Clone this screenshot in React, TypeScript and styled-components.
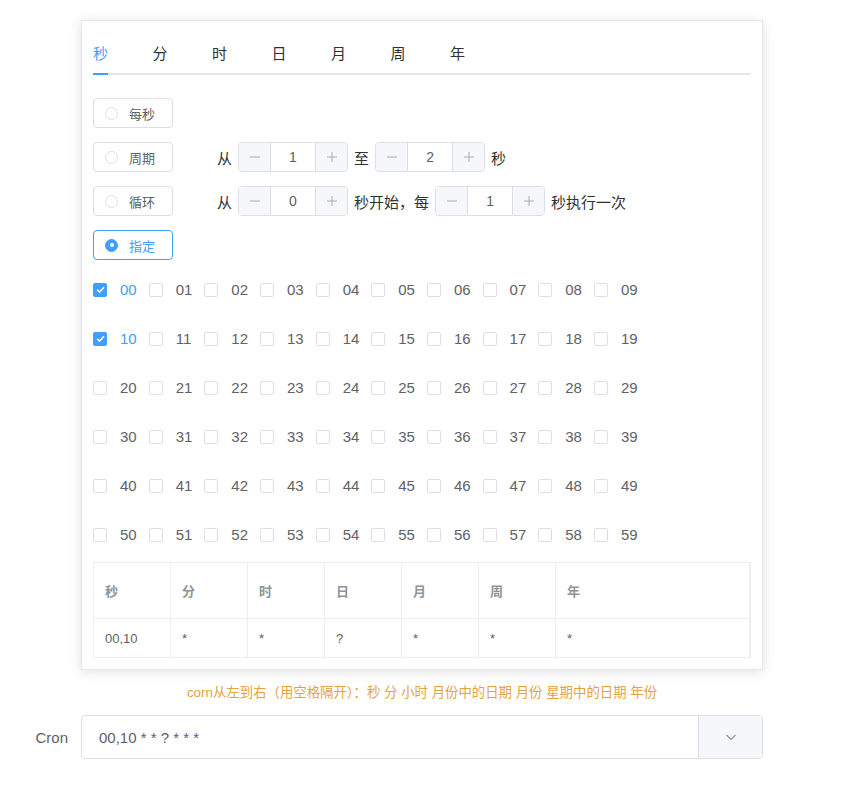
import React from "react";
import styled, { createGlobalStyle } from "styled-components";

const GlobalStyle = createGlobalStyle`
  html, body { margin: 0; padding: 0; background: #fff; }
  body {
    font-family: "Liberation Sans", Arial, "Noto Sans CJK SC", sans-serif;
    color: #606266;
  }
  * { box-sizing: border-box; }
`;

const Page = styled.div`
  padding-top: 20px;
  width: 867px;
`;

const Card = styled.div`
  margin-left: 81px;
  width: 682px;
  border: 1px solid #e4e7ed;
  box-shadow: 0 2px 12px 0 rgba(0, 0, 0, 0.12);
  background: #fff;
  padding: 12px 11px 11px 11px;
`;

const TabBar = styled.div`
  display: flex;
  height: 42px;
  border-bottom: 2px solid #e4e7ed;
`;

const Tab = styled.div<{ $active?: boolean }>`
  position: relative;
  width: 59.5px;
  height: 40px;
  line-height: 40px;
  font-size: 15px;
  color: ${(p) => (p.$active ? "#409eff" : "#303133")};
  font-family: "Noto Sans CJK SC", sans-serif;
  &::after {
    content: "";
    display: ${(p) => (p.$active ? "block" : "none")};
    position: absolute;
    left: 0;
    bottom: -2px;
    width: 15px;
    height: 2px;
    background: #409eff;
  }
`;

const Body = styled.div`
  padding-top: 23px;
`;

const OptionRow = styled.div`
  display: flex;
  align-items: center;
  height: 30px;
  margin-bottom: 14px;
`;

const RadioBox = styled.div<{ $checked?: boolean }>`
  width: 80px;
  height: 30px;
  border: 1px solid ${(p) => (p.$checked ? "#409eff" : "#dcdfe6")};
  border-radius: 4px;
  display: flex;
  align-items: center;
  padding-left: 11px;
  flex-shrink: 0;
`;

const RadioCircle = styled.span<{ $checked?: boolean }>`
  width: 13px;
  height: 13px;
  border-radius: 50%;
  border: 1px solid ${(p) => (p.$checked ? "#409eff" : "#dcdfe6")};
  background: ${(p) => (p.$checked ? "#409eff" : "#fff")};
  display: flex;
  align-items: center;
  justify-content: center;
  &::after {
    content: "";
    width: 4px;
    height: 4px;
    border-radius: 50%;
    background: #fff;
    display: ${(p) => (p.$checked ? "block" : "none")};
  }
`;

const RadioLabel = styled.span<{ $checked?: boolean }>`
  margin-left: 11px;
  font-size: 13px;
  color: ${(p) => (p.$checked ? "#409eff" : "#606266")};
  font-family: "Noto Sans CJK SC", sans-serif;
`;

const RowContent = styled.div`
  display: flex;
  align-items: center;
  margin-left: 38px;
`;

const Word = styled.span`
  padding: 0 6px;
  font-size: 15px;
  color: #303133;
  font-family: "Noto Sans CJK SC", sans-serif;
  white-space: nowrap;
`;

const NumberInput = styled.div`
  display: flex;
  width: 110px;
  height: 30px;
  border: 1px solid #dcdfe6;
  border-radius: 4px;
  overflow: hidden;
`;

const StepBtn = styled.div<{ $side: "left" | "right" }>`
  width: 32px;
  background: #f5f7fa;
  display: flex;
  align-items: center;
  justify-content: center;
  color: #a8abb2;
  ${(p) => (p.$side === "left" ? "border-right: 1px solid #dcdfe6;" : "border-left: 1px solid #dcdfe6;")}
`;

const NumValue = styled.div`
  flex: 1;
  display: flex;
  align-items: center;
  justify-content: center;
  font-size: 14px;
  color: #606266;
`;

const CheckGrid = styled.div`
  display: grid;
  grid-template-columns: repeat(10, 55.67px);
  grid-auto-rows: 49px;
  margin-top: -9px;
`;

const CheckItem = styled.div`
  display: flex;
  align-items: center;
`;

const CheckBox = styled.span<{ $checked?: boolean }>`
  width: 14px;
  height: 14px;
  border-radius: 2px;
  border: 1px solid ${(p) => (p.$checked ? "#409eff" : "#dcdfe6")};
  background: ${(p) => (p.$checked ? "#409eff" : "#fff")};
  display: flex;
  align-items: center;
  justify-content: center;
  flex-shrink: 0;
`;

const CheckLabel = styled.span<{ $checked?: boolean }>`
  margin-left: 13px;
  font-size: 15px;
  color: ${(p) => (p.$checked ? "#409eff" : "#606266")};
`;

const Table = styled.div`
  margin-top: 3px;
  width: 658px;
  border: 1px solid #ebeef5;
  border-right-width: 2px;
`;

const TRow = styled.div<{ $head?: boolean }>`
  display: grid;
  grid-template-columns: repeat(6, 77px) 1fr;
  height: ${(p) => (p.$head ? "56px" : "38px")};
  border-bottom: ${(p) => (p.$head ? "1px solid #ebeef5" : "none")};
`;

const Cell = styled.div<{ $head?: boolean }>`
  display: flex;
  align-items: center;
  padding-left: 11px;
  border-right: 1px solid #ebeef5;
  font-size: 13px;
  font-weight: ${(p) => (p.$head ? 700 : 400)};
  color: ${(p) => (p.$head ? "#909399" : "#606266")};
  font-family: "Liberation Sans", Arial, "Noto Sans CJK SC", sans-serif;
  &:last-child { border-right: none; }
`;

const Hint = styled.div`
  margin-left: 81px;
  width: 682px;
  margin-top: 13px;
  text-align: center;
  font-size: 13.4px;
  line-height: 20px;
  color: #e6a23c;
  font-family: "Liberation Sans", Arial, "Noto Sans CJK SC", sans-serif;
`;

const CronRow = styled.div`
  display: flex;
  align-items: center;
  margin-top: 12px;
`;

const CronLabel = styled.div`
  width: 81px;
  padding-right: 13px;
  text-align: right;
  font-size: 15px;
  color: #606266;
`;

const CronInput = styled.div`
  width: 682px;
  height: 44px;
  border: 1px solid #dcdfe6;
  border-radius: 4px;
  display: flex;
  overflow: hidden;
`;

const CronText = styled.div`
  flex: 1;
  display: flex;
  align-items: center;
  padding-left: 17px;
  font-size: 15px;
  color: #606266;
`;

const CronAppend = styled.div`
  width: 64px;
  background: #f5f7fa;
  border-left: 1px solid #dcdfe6;
  display: flex;
  align-items: center;
  justify-content: center;
`;

const Minus = () => (
  <svg width="12" height="12" viewBox="0 0 12 12">
    <path d="M1 6h10" stroke="#a8abb2" strokeWidth="1" />
  </svg>
);
const Plus = () => (
  <svg width="12" height="12" viewBox="0 0 12 12">
    <path d="M1 6h10M6 1v10" stroke="#a8abb2" strokeWidth="1" />
  </svg>
);
const Check = () => (
  <svg width="11" height="11" viewBox="0 0 10 10">
    <path d="M2 5.2l2.1 2.1L8.2 3" stroke="#fff" strokeWidth="1.4" fill="none" />
  </svg>
);
const Chevron = () => (
  <svg width="14" height="14" viewBox="0 0 14 14">
    <path d="M2.5 5l4.5 4.5L11.5 5" stroke="#909399" strokeWidth="1.2" fill="none" />
  </svg>
);

const NumBox = ({ v }: { v: number }) => (
  <NumberInput>
    <StepBtn $side="left"><Minus /></StepBtn>
    <NumValue>{v}</NumValue>
    <StepBtn $side="right"><Plus /></StepBtn>
  </NumberInput>
);

const tabs = ["秒", "分", "时", "日", "月", "周", "年"];
const checked = new Set([0, 10]);

export default function App() {
  return (
    <Page>
      <GlobalStyle />
      <Card>
        <TabBar>
          {tabs.map((t, i) => (
            <Tab key={t} $active={i === 0}>{t}</Tab>
          ))}
        </TabBar>
        <Body>
          <OptionRow>
            <RadioBox><RadioCircle /><RadioLabel>每秒</RadioLabel></RadioBox>
          </OptionRow>
          <OptionRow>
            <RadioBox><RadioCircle /><RadioLabel>周期</RadioLabel></RadioBox>
            <RowContent>
              <Word>从</Word>
              <NumBox v={1} />
              <Word>至</Word>
              <NumBox v={2} />
              <Word>秒</Word>
            </RowContent>
          </OptionRow>
          <OptionRow>
            <RadioBox><RadioCircle /><RadioLabel>循环</RadioLabel></RadioBox>
            <RowContent>
              <Word>从</Word>
              <NumBox v={0} />
              <Word>秒开始，每</Word>
              <NumBox v={1} />
              <Word>秒执行一次</Word>
            </RowContent>
          </OptionRow>
          <OptionRow>
            <RadioBox $checked><RadioCircle $checked /><RadioLabel $checked>指定</RadioLabel></RadioBox>
          </OptionRow>
          <CheckGrid>
            {Array.from({ length: 60 }, (_, i) => {
              const on = checked.has(i);
              return (
                <CheckItem key={i}>
                  <CheckBox $checked={on}>{on && <Check />}</CheckBox>
                  <CheckLabel $checked={on}>{String(i).padStart(2, "0")}</CheckLabel>
                </CheckItem>
              );
            })}
          </CheckGrid>
          <Table>
            <TRow $head>
              {tabs.map((t) => (
                <Cell $head key={t}>{t}</Cell>
              ))}
            </TRow>
            <TRow>
              {["00,10", "*", "*", "?", "*", "*", "*"].map((v, i) => (
                <Cell key={i}>{v}</Cell>
              ))}
            </TRow>
          </Table>
        </Body>
      </Card>
      <Hint>corn从左到右（用空格隔开）：秒 分 小时 月份中的日期 月份 星期中的日期 年份</Hint>
      <CronRow>
        <CronLabel>Cron</CronLabel>
        <CronInput>
          <CronText>00,10 * * ? * * *</CronText>
          <CronAppend><Chevron /></CronAppend>
        </CronInput>
      </CronRow>
    </Page>
  );
}
